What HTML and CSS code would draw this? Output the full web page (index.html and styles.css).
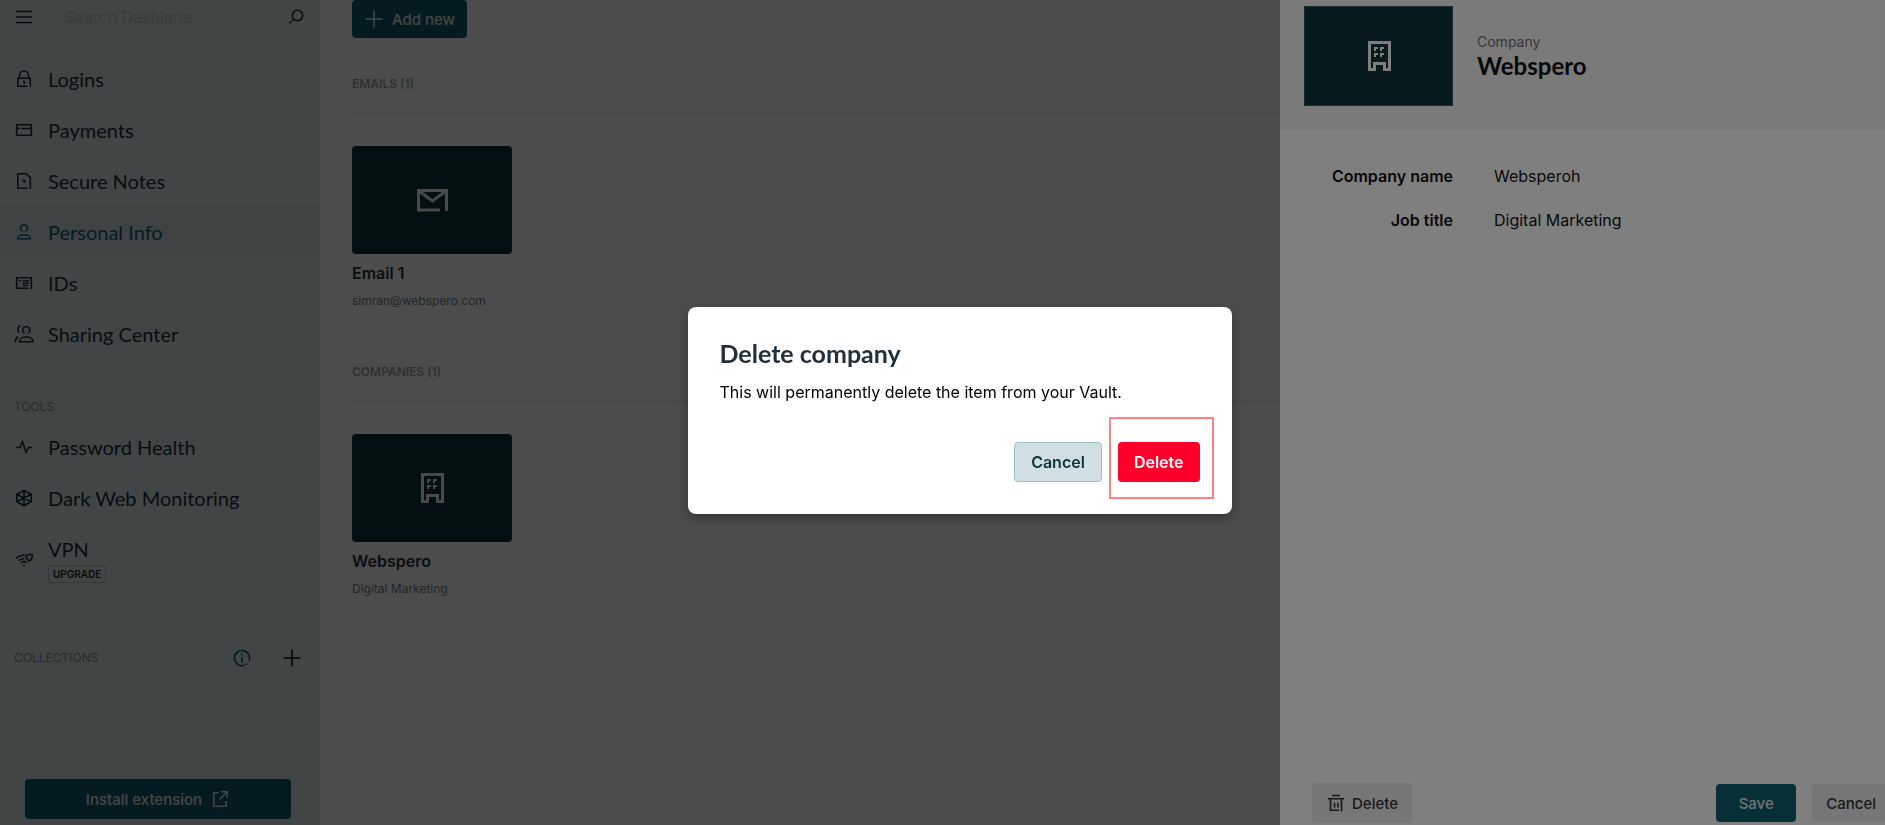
FILE: index.html
```html
<!DOCTYPE html>
<html lang="en">
<head>
<meta charset="utf-8">
<title>Personal Info</title>
<link rel="stylesheet" href="styles.css">
</head>
<body>
<div class="app">
  <aside class="sidebar">
    <div class="search">
      <button class="icon-btn" aria-label="Collapse menu"><svg class="ic" viewBox="0 0 20 20"><path d="M2 4.500h16M2 10h16M2 15.500h16"/></svg></button>
      <input class="search-input" type="text" placeholder="Search Dashlane" aria-label="Search Dashlane">
      <button class="icon-btn" aria-label="Search"><svg class="ic" viewBox="0 0 20 20"><circle cx="11.500" cy="8.500" r="5.200"/><path d="M7.800 12.200l-1.500 1.500M5.500 14.200L3.500 16.500"/></svg></button>
    </div>
    <nav class="nav">
      <a class="item" href="#"><svg class="ic" viewBox="0 0 20 20"><path d="M5.500 9V6.500a4.500 4.500 0 0 1 9 0V9M13.500 17.300H3.800V9.300h12.500v8.800M10.200 12v3M9 12.500h1.500"/></svg>Logins</a>
      <a class="item" href="#"><svg class="ic" viewBox="0 0 20 20"><path d="M2.700 4.700h14.600v10.600H2.700zM3 8.500h3M7.500 8.500H17"/></svg>Payments</a>
      <a class="item" href="#"><svg class="ic" viewBox="0 0 20 20"><path d="M13.500 17.200H3.800V2.700h8.500l4 4v11.300"/><path d="M8 9.500h2.500v2.500"/></svg>Secure Notes</a>
      <a class="item active" href="#"><svg class="ic" viewBox="0 0 20 20"><path d="M8.500 9.300a3.500 3.500 0 1 1 3 0M3.700 16.800c0-5.500 12.600-5.500 12.600 0z"/></svg>Personal Info</a>
      <a class="item" href="#"><svg class="ic" viewBox="0 0 20 20"><path d="M14.500 15.300H2.700V4.700h14.600v11.300M5 7.700h2M8.500 7.700H15M8.500 10.200H15M8.500 12.500H14"/></svg>IDs</a>
      <a class="item" href="#"><svg class="ic" viewBox="0 0 20 20"><path d="M10.500 9.300a3.600 3.600 0 1 1 3.500 0M5.500 17.800c0-6.500 13.500-6.500 13.500 0zM6.500 1.800a3.700 3.700 0 0 0-1 6.700M1 18.300c.3-2.500 1-4.300 3-5.800"/></svg>Sharing Center</a>
    </nav>
    <h2 class="side-label">TOOLS</h2>
    <nav class="nav">
      <a class="item" href="#"><svg class="ic" viewBox="0 0 20 20"><path d="M2 10.500h4l2.500-6 3.500 11 2.500-5H18"/></svg>Password Health</a>
      <a class="item" href="#"><svg class="ic" viewBox="0 0 20 20"><path d="M10 2.500l7.200 3.700v7.600L10 17.500l-7.200-3.700V6.200zM10 2.500v15M2.800 6.200L17.200 13.800M17.200 6.200L2.800 13.800"/></svg>Dark Web Monitoring</a>
      <a class="item tall" href="#"><svg class="ic" viewBox="0 0 20 20"><path d="M2 8.500C4 6.500 7 5.300 10.500 5M4.500 10.800C6 9.300 8 8.500 10.500 8.500M6.800 13c1.500-1.500 4-1.700 6-.3M12.200 5.300c2 0 2.500-1 3.300-1 .8 0 1.500.7 2.700.7.300 3-.7 5-3.200 6-1.800-1-2.800-3-2.800-5.700zM9.200 15.500h1.600"/></svg><span class="stack">VPN<span class="tag">UPGRADE</span></span></a>
    </nav>
    <div class="collections">
      <h2 class="side-label">COLLECTIONS</h2>
      <button class="icon-btn info" aria-label="About collections"><svg class="ic" viewBox="0 0 20 20"><path d="M13.500 16.900A7.600 7.600 0 1 1 17 13.200M10 9v5.500M10 5.500v2M15.500 15.500l-1 1"/></svg></button>
      <button class="icon-btn plus" aria-label="Add collection"><svg class="ic" viewBox="0 0 20 20"><path d="M10 1.500v17M1.500 10h17"/></svg></button>
    </div>
    <div class="install">
      <button class="primary wide">Install extension<svg class="ic" viewBox="0 0 20 20"><path d="M8.500 3.800H3.800v13.400h12.400V12M11 2.800h6.200V9M17 3L9.500 10.500"/></svg></button>
    </div>
  </aside>

  <main class="main">
    <button class="primary add"><svg class="ic" viewBox="0 0 20 20"><path d="M10 1.500v17M1.500 10h17"/></svg>Add new</button>
    <section class="group">
      <h2 class="group-label">EMAILS (1)</h2>
      <article class="card">
        <div class="thumb"><svg class="big" viewBox="0 0 32 32"><path d="M24 26H2.500V6.500h28V27M3 7l13.500 10L30 7"/></svg></div>
        <h3 class="card-title">Email 1</h3>
        <p class="card-sub">simran@webspero.com</p>
      </article>
    </section>
    <section class="group">
      <h2 class="group-label">COMPANIES (1)</h2>
      <article class="card">
        <div class="thumb"><svg class="big" viewBox="0 0 32 32"><path d="M6.500 2.500h20v27h-5v-6h-10v6h-5z"/><path class="fill" d="M11 7h4v2h-2v2h-2zM17 7h4v2h-2v2h-2zM11 13h4v2h-2v2h-2zM17 13h4v2h-2v2h-2z"/></svg></div>
        <h3 class="card-title">Webspero</h3>
        <p class="card-sub">Digital Marketing</p>
      </article>
    </section>
  </main>
</div>

<div class="shade"></div>

<aside class="drawer">
  <header class="drawer-head">
    <div class="drawer-thumb"><svg class="big" viewBox="0 0 32 32"><path d="M6.500 2.500h20v27h-5v-6h-10v6h-5z"/><path class="fill" d="M11 7h4v2h-2v2h-2zM17 7h4v2h-2v2h-2zM11 13h4v2h-2v2h-2zM17 13h4v2h-2v2h-2z"/></svg></div>
    <div>
      <p class="kind">Company</p>
      <h2 class="drawer-title">Webspero</h2>
    </div>
  </header>
  <dl class="fields">
    <dt>Company name</dt><dd>Websperoh</dd>
    <dt>Job title</dt><dd>Digital Marketing</dd>
  </dl>
  <footer class="drawer-foot">
    <button class="quiet"><svg class="ic" viewBox="0 0 20 20"><path d="M6 2.500h8M2 5.800h16M13 17.300H4.500V6M15.500 6v12.500M8.500 10v4.500M12 10v4.500"/></svg>Delete</button>
    <button class="primary save">Save</button>
    <button class="quiet edge">Cancel</button>
  </footer>
</aside>

<div class="overlay">
  <div class="dialog" role="dialog" aria-modal="true" aria-labelledby="dialog-title">
    <h1 class="dialog-title" id="dialog-title">Delete company</h1>
    <p class="dialog-text">This will permanently delete the item from your Vault.</p>
    <div class="actions">
      <button class="btn cancel">Cancel</button>
      <button class="btn danger">Delete</button>
    </div>
  </div>
</div>
</body>
</html>
```
FILE: styles.css
```css
* { box-sizing: border-box; }
body { margin: 0; height: 100vh; overflow: hidden; background: #fff; color: #1f3238; font-family: Inter, "Liberation Sans", sans-serif; font-size: 16px; }
h1, h2, h3, p, dl, dd { margin: 0; }
button { border: 0; padding: 0; background: none; font: inherit; color: inherit; }
.ic { width: 20px; height: 20px; fill: none; stroke: currentColor; stroke-width: 1.6; flex: none; }
.icon-btn { display: flex; }

.app { display: flex; height: 100vh; }
.sidebar { width: 320px; flex: none; display: flex; flex-direction: column; background: #dce6e9; color: #14303a; }
.search { display: flex; align-items: center; height: 54px; padding: 0 14px 19px; border-bottom: 1px solid #d3dde0; }
.search-input { flex: 1; min-width: 0; border: 0; padding: 0 0 0 30px; background: none; font: inherit; }
.search-input::placeholder { color: #bcc6c9; opacity: 1; }
.nav { margin-top: -1px; }
.item { display: flex; align-items: center; gap: 14px; height: 51px; padding: 0 14px; font: 20px Lato, sans-serif; color: inherit; text-decoration: none; }
.item.active { background: #d2dfe0; color: #0e5e78; }
.item.tall { height: 74px; }
.stack { display: flex; flex-direction: column; align-items: flex-start; gap: 4px; line-height: 24px; }
.tag { border: 1px solid #a0bcc2; border-radius: 2px; padding: 0 4px; font: 600 10px/16px Inter, sans-serif; color: #14242a; }
.side-label { font-size: 12px; font-weight: 400; line-height: 16px; color: #839094; padding-left: 14px; }
.sidebar > .side-label { margin: 40px 0 7px; }
.collections { display: flex; align-items: center; height: 32px; margin-top: 45px; padding-right: 18px; }
.collections .side-label { margin-right: auto; }
.info { color: #0e5e78; }
.plus { margin-left: 30px; color: #111; }
.install { margin-top: auto; height: 92px; padding: 45px 29px 0 25px; border-top: 1px solid #d3dde0; }
.primary { display: flex; align-items: center; justify-content: center; gap: 8px; border-radius: 4px; background: #0e5e6e; color: #e4e8e8; font-size: 15px; font-weight: 500; }
.wide { width: 100%; height: 40px; }

.main { flex: 1; padding: 0 32px; }
.add { width: 115px; height: 38px; }
.group { margin-top: 38px; }
.group + .group { margin-top: 55px; }
.group-label { height: 38px; border-bottom: 1px solid #e8e8e8; font-size: 12px; font-weight: 600; line-height: 16px; color: #9aa3a6; }
.card { width: 160px; margin-top: 32px; }
.thumb { display: grid; place-items: center; height: 108px; border-radius: 4px; background: #0e353d; color: #f4f4f4; }
.big { width: 32px; height: 32px; fill: none; stroke: currentColor; stroke-width: 3; }
.big .fill { fill: currentColor; stroke: none; }
.card-title { margin-top: 7px; font-size: 16px; font-weight: 600; line-height: 24px; }
.card-sub { margin-top: 8px; font-size: 12px; line-height: 16px; color: #73828a; }

.shade { position: fixed; inset: 0; background: rgb(0 0 0 / 40%); }
.drawer { position: fixed; inset: 0 0 0 auto; width: 605px; display: flex; flex-direction: column; background: #fff; color: #111; }
.drawer-head { display: flex; gap: 24px; height: 130px; padding: 6px 24px 24px; background: #f4f4f4; }
.drawer-thumb { display: grid; place-items: center; width: 149px; height: 100px; border: 1px solid #355a62; background: #0e353d; color: #fff; }
.kind { margin-top: 26px; font-size: 14px; line-height: 20px; color: #6e6e6e; }
.drawer-title { font: 700 24px/28px Lato, sans-serif; }
.fields { display: grid; grid-template-columns: 149px 1fr; column-gap: 41px; row-gap: 20px; padding: 34px 24px; line-height: 24px; }
dt { font-weight: 600; text-align: right; }
.drawer-foot { display: flex; align-items: center; gap: 16px; margin-top: auto; padding: 0 0 2px 32px; }
.quiet { display: flex; align-items: center; gap: 6px; height: 40px; padding: 0 14px; border-radius: 4px; background: #ececec; color: #333; font-size: 15px; font-weight: 500; }
.edge { height: 38px; padding: 0 9px 0 14px; border-radius: 4px 0 0 4px; }
.save { width: 80px; height: 38px; margin-left: auto; }

.overlay { position: fixed; inset: 0; display: grid; place-items: center; padding: 0 0 4px 34px; background: rgb(0 0 0 / 50%); }
.dialog { width: 544px; padding: 32px; border-radius: 8px; background: #fff; box-shadow: 0 4px 12px rgb(0 0 0 / 35%); }
.dialog-title { font: 700 25px/28px Lato, sans-serif; color: #23303c; }
.dialog-text { margin-top: 13px; line-height: 24px; color: #000; }
.actions { display: flex; justify-content: flex-end; gap: 16px; margin-top: 38px; }
.btn { position: relative; height: 40px; padding: 0 16px; border-radius: 4px; font-weight: 600; }
.cancel { border: 1px solid #9dbfc6; background: #cfdfe3; color: #0e353d; }
.danger { background: #ff002b; color: #fff; }
.danger::after { content: ""; position: absolute; inset: -25px -14px -17px -9px; border: 2px solid #ff8080; }
```
